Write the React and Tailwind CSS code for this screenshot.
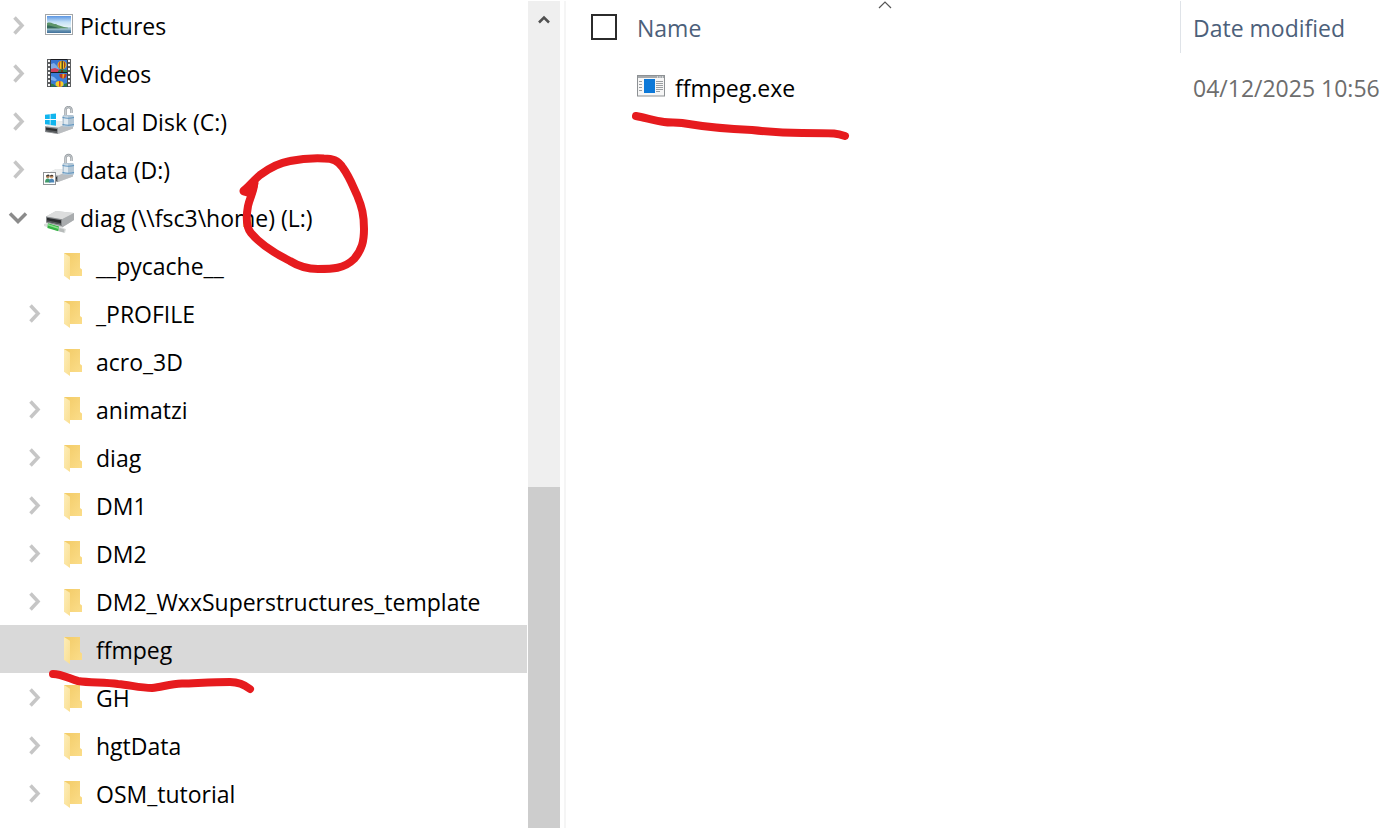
import React from 'react';

const PicturesIcon = () => (
  <svg viewBox="0 0 30 30" className="size-[30px]" aria-hidden="true">
    <defs>
      <linearGradient id="sky" x1="0" y1="0" x2="0" y2="1">
        <stop offset="0" stopColor="#5b95e2" />
        <stop offset="0.35" stopColor="#c3e0f6" />
        <stop offset="0.62" stopColor="#e2f1f6" />
        <stop offset="0.72" stopColor="#8fb6c9" />
        <stop offset="1" stopColor="#3f6f9a" />
      </linearGradient>
    </defs>
    <rect x="1.5" y="4.5" width="27" height="20" fill="#fff" stroke="#a3a6a8" />
    <rect x="3" y="6" width="24" height="17" fill="url(#sky)" />
    <path d="M3 13c2-.8 4-.6 6 .5 2 .8 3 .4 4.500 1.400 2.500.6 4 1.600 6.500 2l4 .8v.8H3z" fill="#5d9468" />
    <path d="M3 15.500c3 0 5 .6 8 1.600l6 1.600H3z" fill="#33685a" />
    <path d="M3 18.500h24v1H3z" fill="#b4cfd8" opacity="0.8" />
  </svg>
);

const VideosIcon = () => (
  <svg viewBox="0 0 30 30" className="size-[30px]" aria-hidden="true">
    <rect x="3" y="1" width="24" height="28" fill="#5c5e60" />
    {[2, 6, 10, 14, 18, 22, 26].map((y) => (
      <g key={y} fill="#f4f4f4">
        <rect x="4" y={y} width="2" height="2" />
        <rect x="24" y={y} width="2" height="2" />
      </g>
    ))}
    <rect x="6.500" y="1" width="17" height="28" fill="#1c1d22" />
    <rect x="7" y="2" width="16" height="12" fill="#3a74cf" />
    <rect x="7" y="15" width="16" height="13.500" fill="#3a7bd5" />
    <path d="M7 6l3-1 3 3 2 3v1H7z" fill="#7fabe8" />
    <path d="M7 11l4-1 5 2v2H7z" fill="#d0405a" />
    <path d="M14 13l3-2 6 1v2h-9z" fill="#2d7d46" />
    <ellipse cx="18" cy="7" rx="4.500" ry="4.200" fill="#f3c921" />
    <path d="M15.500 3.700c-1.500 1.800-1.500 5 .8 7.200-.6-2.500-.6-5.500.4-8z" fill="#d8452c" />
    <path d="M17.600 2.800h1.200v8.400h-1.200z" fill="#2a2a2a" />
    <path d="M20.500 3.700c1.500 1.800 1.500 5-.8 7.200.6-2.500.6-5.500-.4-8z" fill="#a13a22" />
    <rect x="17" y="12" width="2" height="2" fill="#6a3b18" />
    <path d="M15.500 16h7a4 4 0 0 1-3 4.500h-1a4 4 0 0 1-3-4.500z" fill="#b8392c" />
    <path d="M18.500 16h2l-1 4.500h-1z" fill="#f0b820" />
    <path d="M7 18l3 1 3 3-2 1-4-1z" fill="#7fb0ee" />
    <ellipse cx="15.500" cy="26" rx="4" ry="3" fill="#f4cf2a" />
    <path d="M15 23h1.500v5.500H15z" fill="#d8452c" />
    <path d="M7 25.500l3 1 2 2H7zM20 26l3-1v3.500h-3z" fill="#2d7d46" />
  </svg>
);

const Drive = () => (
  <g>
    <path d="M1 20.500L12 15l17 .5v7L14 28 1.500 26z" fill="#d3d5d7" />
    <path d="M1 20.500L12 15l17 .5-14.500 6z" fill="#eceded" />
    <path d="M14 21.500l15-6v7L14 28z" fill="#babdc0" />
    <path d="M1 20.300l13 1.500V28L1 26z" fill="#8d9093" />
    <path d="M2 21.500l11 1.400v3.900L2 25z" fill="#2e3032" />
    <path d="M2 23.800l11 1.500v1.500L2 25z" fill="#5a5d60" />
  </g>
);

const Padlock = () => (
  <g>
    <path d="M21.500 9V4a3 3 0 0 1 6 0v3" fill="none" stroke="#92989d" strokeWidth="2.400" />
    <path d="M21.500 9V4a3 3 0 0 1 6 0v3" fill="none" stroke="#d5dadd" strokeWidth="0.800" />
    <rect x="18.500" y="9" width="11.500" height="12" rx="1.500" fill="#b3c6d5" />
    <rect x="20" y="10.500" width="4" height="9" fill="#dfe9f0" />
    <path d="M18.500 11.500c4 1 8 1 11.500 0M18.500 18.500c4 1 8 1 11.500 0" fill="none" stroke="#5c93bf" strokeWidth="1.200" />
  </g>
);

const LocalDiskIcon = () => (
  <svg viewBox="0 0 30 30" className="size-[30px]" aria-hidden="true">
    <Drive />
    <Padlock />
    <path d="M1 8.800l4.800-.6v4.900H1zM6.500 8.100L12 7.400v5.700H6.500zM1 13.900h4.800v4.900L1 18.200zM6.500 13.900H12v5.800l-5.500-.8z" fill="#12b5ee" />
  </svg>
);

const DataDiskIcon = () => (
  <svg viewBox="0 0 30 30" className="size-[30px] overflow-visible" aria-hidden="true">
    <Drive />
    <Padlock />
    <rect x="-0.500" y="18.500" width="12" height="12" fill="#fff" stroke="#8f9396" />
    <circle cx="3.800" cy="22.500" r="1.800" fill="#b98a5e" />
    <path d="M2 22.500a1.900 1.900 0 0 1 3.700-.6z" fill="#3c3a38" />
    <path d="M1 28.500c0-2.800 1-4 2.800-4s2.700 1.200 2.700 4z" fill="#3f9a6a" />
    <circle cx="7.600" cy="22.800" r="1.800" fill="#d6a77c" />
    <path d="M5.800 22.500a1.900 1.900 0 0 1 3.700-.3z" fill="#4a3b30" />
    <path d="M5 28.500c0-2.800 1-3.800 2.700-3.800s2.600 1 2.600 3.800z" fill="#4a86b8" />
  </svg>
);

const NetworkDriveIcon = () => (
  <svg viewBox="0 0 30 30" className="size-[30px] overflow-visible" aria-hidden="true">
    <path d="M2 14.500L12 9l18 2v7l-12 7.500L2 21z" fill="#c9cbcc" />
    <path d="M2 14.500L12 9l18 2-12 6.300z" fill="#dcdddd" />
    <path d="M18 17.300L30 11v7l-12 7.500z" fill="#a9acae" />
    <path d="M2 14.500l16 2.800v7L2 20.500z" fill="#85888a" />
    <path d="M3 15.800l14 2.500v4.300L3 19.600z" fill="#2a2c2e" />
    <path d="M3 18.300l14 2.900v1.400L3 19.600z" fill="#55585a" />
    <path d="M0 22l4-1 18 6-1 4-4-1L0 24z" fill="#d9dcdb" />
    <path d="M4 21.200l11 3.400-.7 4.600L3.400 26z" fill="#35b344" />
    <path d="M4 22l10.800 3.400-.3 1.500L3.800 23.500z" fill="#8be28c" />
    <path d="M15.500 26l5 1.500-.5 3-5-1.200z" fill="#b7bbba" />
  </svg>
);

const FolderIcon = () => (
  <svg viewBox="0 0 30 30" className="size-[30px]" aria-hidden="true">
    <defs>
      <linearGradient id="folderBack" x1="0" y1="0" x2="1" y2="1">
        <stop offset="0" stopColor="#f3cb66" />
        <stop offset="1" stopColor="#fbdd8a" />
      </linearGradient>
      <linearGradient id="folderFlap" x1="0" y1="0" x2="1" y2="1">
        <stop offset="0" stopColor="#fdedb8" />
        <stop offset="1" stopColor="#fadf92" />
      </linearGradient>
    </defs>
    <path d="M4 3h16v15l2 1.500V26H4z" fill="url(#folderBack)" />
    <path d="M4 3l6 3.800V30l-6-4.300z" fill="url(#folderFlap)" />
  </svg>
);

const ExeIcon = () => (
  <svg viewBox="0 0 28 22" className="mb-1 h-[22px] w-7 shrink-0" aria-hidden="true">
    <rect x="0.500" y="0.500" width="27" height="20.500" fill="#f6f6f6" stroke="#8d9194" />
    <rect x="1" y="1" width="26" height="2" fill="#a5a9ac" />
    <path d="M20 2h1M22.500 2h1M25 2h1" stroke="#fff" />
    <path d="M2 6.500h3M2 9.500h3M2 12.500h3M2 15.500h3" stroke="#9a9ea1" />
    <path d="M19 6.500h7M19 8.500h7M19 10.500h7M19 12.500h7M19 14.500h7M19 16.500h4" stroke="#9a9ea1" />
    <rect x="7" y="4" width="11" height="14" fill="#0c78d8" />
  </svg>
);

const tree = [
  { name: 'Pictures', icon: PicturesIcon, state: 'closed' },
  { name: 'Videos', icon: VideosIcon, state: 'closed' },
  { name: 'Local Disk (C:)', icon: LocalDiskIcon, state: 'closed' },
  { name: 'data (D:)', icon: DataDiskIcon, state: 'closed' },
  { name: 'diag (\\\\fsc3\\home) (L:)', icon: NetworkDriveIcon, state: 'open', mark: 'circle' },
  { name: '__pycache__', nested: true },
  { name: '_PROFILE', nested: true, state: 'closed' },
  { name: 'acro_3D', nested: true },
  { name: 'animatzi', nested: true, state: 'closed' },
  { name: 'diag', nested: true, state: 'closed' },
  { name: 'DM1', nested: true, state: 'closed' },
  { name: 'DM2', nested: true, state: 'closed' },
  { name: 'DM2_WxxSuperstructures_template', nested: true, state: 'closed' },
  { name: 'ffmpeg', nested: true, selected: true, mark: 'underline' },
  { name: 'GH', nested: true, state: 'closed' },
  { name: 'hgtData', nested: true, state: 'closed' },
  { name: 'OSM_tutorial', nested: true, state: 'closed' },
];

const files = [{ name: 'ffmpeg.exe', modified: '04/12/2025 10:56' }];

// Red pen strokes drawn over the rows
const CircleMark = () => (
  <svg viewBox="0 0 140 130" className="pointer-events-none absolute -top-11 left-[236px] z-10 h-[130px] w-[140px]" aria-hidden="true">
    <path
      d="M18 35C18 42 14 48 12 57C10 68 10 78 15 84C24 95 36 103 54 112C62 117 70 120 82 120C96 120 108 120 118 110C126 101 128 92 128 80C128 66 126 58 121 46C116 35 113 27 107 19C102 11 96 9.500 88 9.500C76 9 64 10 54 12C42 14 32 20 24 26C18 31 14 36 9 41"
      fill="none"
      stroke="#e61b1e"
      strokeWidth="8"
      strokeLinecap="round"
      strokeLinejoin="round"
    />
    <path d="M8 42L18 34L15 44Z" fill="#e61b1e" stroke="#e61b1e" strokeWidth="9" strokeLinejoin="round" />
  </svg>
);

const FolderUnderline = () => (
  <svg viewBox="0 0 210 32" className="pointer-events-none absolute top-10 left-12 z-10 h-8 w-[210px]" aria-hidden="true">
    <path
      d="M5 9C14 9 22 14 30 16C42 18 56 17 70 19C82 20 92 23 104 23C114 22 122 19 134 18.500C150 18 166 17 182 17C192 17 197 20 202 24"
      fill="none"
      stroke="#e61b1e"
      strokeWidth="8"
      strokeLinecap="round"
    />
  </svg>
);

const FileUnderline = () => (
  <svg viewBox="0 0 222 32" className="pointer-events-none absolute top-[54px] left-10 h-8 w-[222px]" aria-hidden="true">
    <path
      d="M6 7C16 9 26 12 34 13C40 14 46 13 52 14C76 18 96 20 122 21C140 23 154 24 172 24C184 24 194 24 204 24.500C209 25 212 26 215 27"
      fill="none"
      stroke="#e61b1e"
      strokeWidth="8"
      strokeLinecap="round"
    />
  </svg>
);

const Expander = ({ name, state }) => (
  <button className="flex w-9 shrink-0 justify-center pt-0.5" aria-label={`Toggle ${name}`} aria-expanded={state === 'open'}>
    {state === 'open' ? (
      <svg viewBox="0 0 20 20" className="size-5" aria-hidden="true">
        <path d="M2 5.500L10 13.500L18 5.500" fill="none" stroke="#8b8b8b" strokeWidth="3.500" />
      </svg>
    ) : (
      <svg viewBox="0 0 20 20" className="size-5" aria-hidden="true">
        <path d="M6.500 1.500L14 9.500L6.500 17.500" fill="none" stroke="#c6c6c6" strokeWidth="3.500" />
      </svg>
    )}
  </button>
);

const TreeRow = ({ item }) => {
  const Icon = item.icon || FolderIcon;
  return (
    <li className={`relative flex h-12 items-center ${item.nested ? 'pl-4' : ''} ${item.selected ? 'bg-[#d9d9d9]' : ''}`}>
      {item.state ? <Expander name={item.name} state={item.state} /> : <span className="w-9 shrink-0" />}
      <button className="flex h-full flex-1 items-center gap-1.5 pl-2 text-left whitespace-nowrap">
        <Icon />
        <span className="pt-0.5">{item.name}</span>
      </button>
      {item.mark === 'circle' && <CircleMark />}
      {item.mark === 'underline' && <FolderUnderline />}
    </li>
  );
};

const FileTable = () => (
  <table className="w-full table-fixed text-left whitespace-nowrap">
    <thead>
      <tr className="h-[54px] text-[#4c607a]">
        <th className="relative w-[590px] p-0 font-normal">
          <svg viewBox="0 0 14 8" className="absolute top-0 left-1/2 h-2 w-3.5 -translate-x-1/2" aria-hidden="true">
            <path d="M1 7L7 1L13 7" fill="none" stroke="#555" strokeWidth="1.200" />
          </svg>
          <div className="flex items-center gap-5">
            <input
              type="checkbox"
              aria-label="Select all"
              className="mb-0.5 ml-px size-[26px] shrink-0 appearance-none border-2 border-[#2b2b2b] bg-white"
            />
            <button>Name</button>
          </div>
        </th>
        <th className="p-0 font-normal">
          <button className="mb-0.5 flex h-[52px] items-center border-l border-[#dfe3e8] pt-0.5 pl-3">Date modified</button>
        </th>
      </tr>
    </thead>
    <tbody>
      {files.map((file) => (
        <tr key={file.name} className="h-[66px]">
          <td className="relative p-0">
            <div className="flex items-center gap-2.5 pl-[47px]">
              <ExeIcon />
              <span>{file.name}</span>
            </div>
            <FileUnderline />
          </td>
          <td className="p-0 pl-[13px] text-[#6d6d6d]">{file.modified}</td>
        </tr>
      ))}
    </tbody>
  </table>
);

export default function App() {
  return (
    <div className="flex h-screen overflow-hidden bg-white pt-px font-['Segoe_UI','Open_Sans',sans-serif] text-[23px] leading-8 text-black">
      <nav className="mr-px w-[527px] shrink-0" aria-label="Folders">
        <ul>
          {tree.map((item) => (
            <TreeRow key={item.name + (item.nested ? '-nested' : '')} item={item} />
          ))}
        </ul>
      </nav>
      <div className="flex w-8 shrink-0 flex-col bg-[#efefef]">
        <button className="flex h-[486px] justify-center pt-3" aria-label="Scroll up">
          <svg viewBox="0 0 12 12" className="size-3" aria-hidden="true">
            <path d="M1 9.500L6 4.500L11 9.500" fill="none" stroke="#505050" strokeWidth="2.500" />
          </svg>
        </button>
        <div className="flex-1 bg-[#cdcdcd]" />
      </div>
      <main className="ml-1 min-w-0 flex-1 border-l-2 border-[#f5f5f5] pl-6">
        <FileTable />
      </main>
    </div>
  );
}
